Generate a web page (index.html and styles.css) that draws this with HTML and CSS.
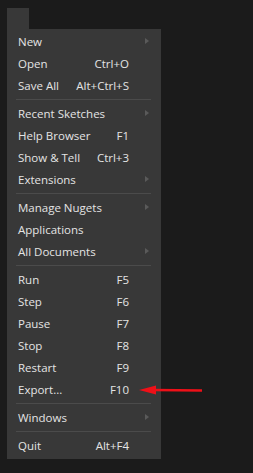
FILE: index.html
```html
<!DOCTYPE html>
<html lang="en">

<head>
    <meta charset="UTF-8">
    <meta name="viewport" content="width=device-width, initial-scale=1.0">
    <title>Menu</title>
    <link rel="stylesheet" href="styles.css">
</head>

<body>

    <div class="menu-tab"></div>

    <div class="menu">
        <div class="item"><span class="label">New</span><span class="key"></span><span class="sub"></span></div>
        <div class="item"><span class="label">Open</span><span class="key">Ctrl+O</span><span class="sub none"></span></div>
        <div class="item"><span class="label">Save All</span><span class="key">Alt+Ctrl+S</span><span class="sub none"></span></div>
        <div class="sep"></div>
        <div class="item"><span class="label">Recent Sketches</span><span class="key"></span><span class="sub"></span></div>
        <div class="item"><span class="label">Help Browser</span><span class="key">F1</span><span class="sub none"></span></div>
        <div class="item"><span class="label">Show &amp; Tell</span><span class="key">Ctrl+3</span><span class="sub none"></span></div>
        <div class="item"><span class="label">Extensions</span><span class="key"></span><span class="sub"></span></div>
        <div class="sep"></div>
        <div class="item"><span class="label">Manage Nugets</span><span class="key"></span><span class="sub"></span></div>
        <div class="item"><span class="label">Applications</span><span class="key"></span><span class="sub none"></span></div>
        <div class="item"><span class="label">All Documents</span><span class="key"></span><span class="sub"></span></div>
        <div class="sep"></div>
        <div class="item"><span class="label">Run</span><span class="key">F5</span><span class="sub none"></span></div>
        <div class="item"><span class="label">Step</span><span class="key">F6</span><span class="sub none"></span></div>
        <div class="item"><span class="label">Pause</span><span class="key">F7</span><span class="sub none"></span></div>
        <div class="item"><span class="label">Stop</span><span class="key">F8</span><span class="sub none"></span></div>
        <div class="item"><span class="label">Restart</span><span class="key">F9</span><span class="sub none"></span></div>
        <div class="item"><span class="label">Export...</span><span class="key">F10</span><span class="sub none"></span></div>
        <div class="sep"></div>
        <div class="item"><span class="label">Windows</span><span class="key"></span><span class="sub"></span></div>
        <div class="sep"></div>
        <div class="item"><span class="label">Quit</span><span class="key">Alt+F4</span><span class="sub none"></span></div>
    </div>

    <!-- annotation arrow pointing at Export -->
    <svg class="pointer" width="64" height="12" viewBox="0 0 64 12">
        <line x1="14" y1="6" x2="63" y2="6.5" stroke="#ee1018" stroke-width="2.6" />
        <polygon points="0,6 17,1.5 17,10.5" fill="#ee1018" />
    </svg>

</body>

</html>
```

FILE: styles.css
```css
* {
    margin: 0;
    padding: 0;
    box-sizing: border-box;
}

body {
    font-family: 'Open Sans', sans-serif;
    font-size: 11.5px;
    background-color: #1b1b1b;
    color: #e4e4e4;
    position: relative;
    height: 473px;
}

.menu-tab {
    margin: 8px 0 0 7px;
    width: 22px;
    height: 21px;
    background-color: #383838;
}

.menu {
    margin-left: 7px;
    width: 154px;
    padding: 2px 0 2px 11px;
    background-color: #383838;
}

.item {
    display: flex;
    align-items: center;
    height: 22px;
    padding-bottom: 2px;
}

.item .label {
    flex: 1;
    white-space: nowrap;
}

.item .key {
    white-space: nowrap;
}

.item .sub {
    width: 0;
    height: 0;
    margin: 0 12px 0 16px;
    border-top: 3px solid transparent;
    border-bottom: 3px solid transparent;
    border-left: 4px solid #5a5a5a;
}

.item .sub.none {
    border-left-color: transparent;
}

.sep {
    height: 1px;
    margin: 2px 10px 3px -2px;
    background-color: #4b4b4b;
}

.pointer {
    position: absolute;
    left: 139px;
    top: 384px;
}
```
